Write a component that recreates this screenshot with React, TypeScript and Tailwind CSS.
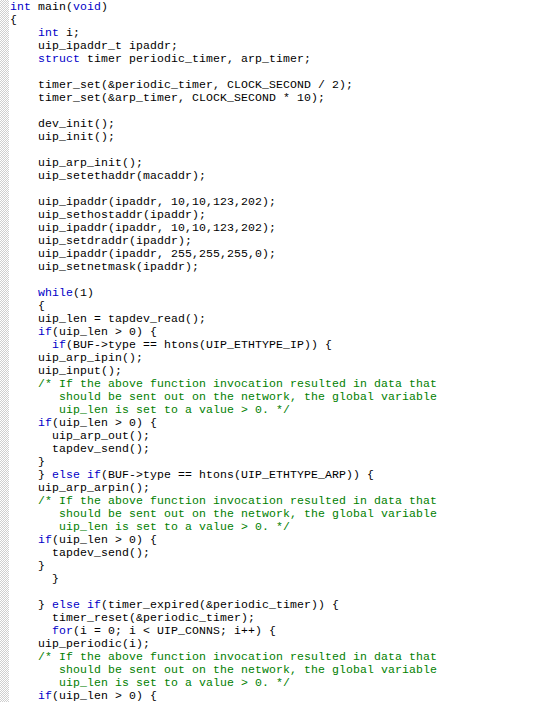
import React from "react";

// source listing, one entry per line; true marks comment lines
const lines: Array<[string, boolean?]> = [
  ["int main(void)"],
  ["{"],
  ["    int i;"],
  ["    uip_ipaddr_t ipaddr;"],
  ["    struct timer periodic_timer, arp_timer;"],
  [""],
  ["    timer_set(&periodic_timer, CLOCK_SECOND / 2);"],
  ["    timer_set(&arp_timer, CLOCK_SECOND * 10);"],
  [""],
  ["    dev_init();"],
  ["    uip_init();"],
  [""],
  ["    uip_arp_init();"],
  ["    uip_setethaddr(macaddr);"],
  [""],
  ["    uip_ipaddr(ipaddr, 10,10,123,202);"],
  ["    uip_sethostaddr(ipaddr);"],
  ["    uip_ipaddr(ipaddr, 10,10,123,202);"],
  ["    uip_setdraddr(ipaddr);"],
  ["    uip_ipaddr(ipaddr, 255,255,255,0);"],
  ["    uip_setnetmask(ipaddr);"],
  [""],
  ["    while(1)"],
  ["    {"],
  ["    uip_len = tapdev_read();"],
  ["    if(uip_len > 0) {"],
  ["      if(BUF->type == htons(UIP_ETHTYPE_IP)) {"],
  ["    uip_arp_ipin();"],
  ["    uip_input();"],
  ["    /* If the above function invocation resulted in data that", true],
  ["       should be sent out on the network, the global variable", true],
  ["       uip_len is set to a value > 0. */", true],
  ["    if(uip_len > 0) {"],
  ["      uip_arp_out();"],
  ["      tapdev_send();"],
  ["    }"],
  ["    } else if(BUF->type == htons(UIP_ETHTYPE_ARP)) {"],
  ["    uip_arp_arpin();"],
  ["    /* If the above function invocation resulted in data that", true],
  ["       should be sent out on the network, the global variable", true],
  ["       uip_len is set to a value > 0. */", true],
  ["    if(uip_len > 0) {"],
  ["      tapdev_send();"],
  ["    }"],
  ["      }"],
  [""],
  ["    } else if(timer_expired(&periodic_timer)) {"],
  ["      timer_reset(&periodic_timer);"],
  ["      for(i = 0; i < UIP_CONNS; i++) {"],
  ["    uip_periodic(i);"],
  ["    /* If the above function invocation resulted in data that", true],
  ["       should be sent out on the network, the global variable", true],
  ["       uip_len is set to a value > 0. */", true],
  ["    if(uip_len > 0) {"],
];

const keywords = /^(int|void|struct|while|if|else|for)$/;

const CodeLine = ({ text }: { text: string }) => {
  const parts = text.split(/\b(int|void|struct|while|if|else|for)\b/);
  return (
    <>
      {parts.map((p, i) =>
        keywords.test(p) ? (
          <span key={i} className="text-[#0000c8]">
            {p}
          </span>
        ) : (
          <span key={i}>{p}</span>
        )
      )}
    </>
  );
};

export default function App() {
  return (
    <div className="flex w-[539px] h-[702px] overflow-hidden bg-white">
      <div className="w-[9px] shrink-0 bg-[repeating-conic-gradient(#cfcfcf_0_25%,#ffffff_0_50%)] bg-[length:2px_2px]" />
      <pre className="pl-[1px] font-['Liberation_Mono',monospace] text-[11.5px] leading-[13px] tracking-[0.1px] text-black">
        {lines.map(([text, comment], i) => (
          <div key={i} className="h-[13px] whitespace-pre">
            {comment ? (
              <span className="text-[#008000]">{text}</span>
            ) : (
              <CodeLine text={text} />
            )}
          </div>
        ))}
      </pre>
    </div>
  );
}
